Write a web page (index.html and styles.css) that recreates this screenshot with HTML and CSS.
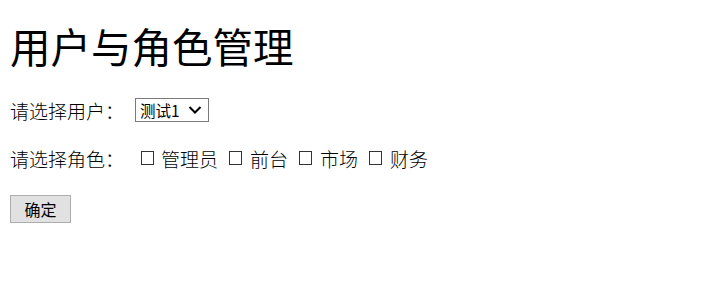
FILE: index.html
```html
<!DOCTYPE html>
<html lang="zh">
<head>
<meta charset="utf-8">
<title>用户与角色管理</title>
<link rel="stylesheet" href="styles.css">
</head>
<body>
<h1 class="title">用户与角色管理</h1>
<div class="row">
  <span class="label">请选择用户：</span>
  <div class="select">
    <span class="select-text">测试1</span>
    <svg class="chev" width="14" height="10" viewBox="0 0 14 10"><path d="M1.5 2 L7 7.5 L12.5 2" fill="none" stroke="#000" stroke-width="2"/></svg>
  </div>
</div>
<div class="row">
  <span class="label">请选择角色：</span>
  <label class="opt"><span class="box"></span>管理员</label>
  <label class="opt"><span class="box"></span>前台</label>
  <label class="opt"><span class="box"></span>市场</label>
  <label class="opt"><span class="box"></span>财务</label>
</div>
<div class="row">
  <button class="btn" type="button">确定</button>
</div>
</body>
</html>
```
FILE: styles.css
```css
html, body {
  margin: 0;
  padding: 0;
  background: #fff;
}
body {
  padding: 0 10px;
  color: #000;
  font-family: "Noto Sans CJK SC", "Noto Sans", sans-serif;
}
.title {
  font-size: 40.5px;
  font-weight: 400;
  line-height: 48px;
  margin: 22px 0 28px;
}
.row {
  display: flex;
  align-items: center;
  height: 24px;
  margin-bottom: 24px;
  font-size: 19px;
  font-weight: 300;
}
.label {
  width: 125px;
}
.select {
  box-sizing: border-box;
  width: 74px;
  height: 24px;
  border: 1px solid #7a7a7a;
  display: flex;
  align-items: center;
  padding: 0 6px 0 4px;
  justify-content: space-between;
  font-size: 15.5px;
  font-weight: 400;
}
.chev { display: block; }
.opt {
  display: flex;
  align-items: center;
  margin-right: 6px;
}
.opt .box {
  box-sizing: border-box;
  width: 13px;
  height: 14px;
  border: 1px solid #333;
  margin: 0 8px 0 5px;
}
.opt:first-of-type .box { margin-left: 6px; margin-right: 7px; }
.btn {
  box-sizing: border-box;
  width: 61px;
  height: 28px;
  margin-top: 6px;
  background: #e1e1e1;
  border: 1px solid #adadad;
  border-radius: 0;
  font-family: "Noto Sans CJK SC", sans-serif;
  font-size: 16px;
  padding: 0;
  color: #000;
}
```
